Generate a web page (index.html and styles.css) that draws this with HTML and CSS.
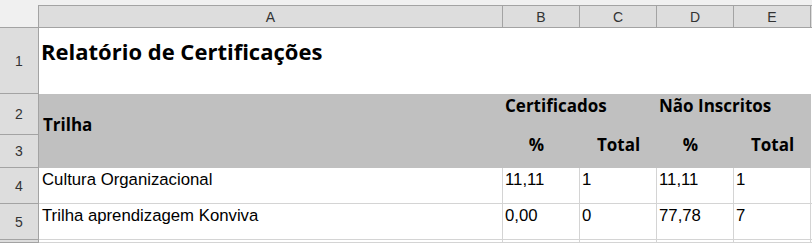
FILE: index.html
```html
<!DOCTYPE html>
<html lang="pt">
<head>
<meta charset="utf-8">
<title>Relatório de Certificações</title>
<link rel="stylesheet" href="styles.css">
</head>
<body>
<div class="sheet">
  <div class="band"></div>

  <div class="corner"></div>
  <div class="colhead">A</div>
  <div class="colhead">B</div>
  <div class="colhead">C</div>
  <div class="colhead">D</div>
  <div class="colhead">E</div>
  <div class="colhead rest"></div>

  <div class="rowhead">1</div>
  <div class="title">Relatório de Certificações</div>

  <div class="rowhead">2</div>
  <div class="hdr trilha">Trilha</div>
  <div class="hdr group">Certificados</div>
  <div class="hdr group">Não Inscritos</div>
  <div class="blank"></div>

  <div class="rowhead">3</div>
  <div class="hdr"></div>
  <div class="hdr sub pct">%</div>
  <div class="hdr sub">Total</div>
  <div class="hdr sub pct">%</div>
  <div class="hdr sub">Total</div>
  <div class="blank"></div>

  <div class="rowhead">4</div>
  <div class="cell name">Cultura Organizacional</div>
  <div class="cell">11,11</div>
  <div class="cell">1</div>
  <div class="cell">11,11</div>
  <div class="cell">1</div>
  <div class="cell end"></div>

  <div class="rowhead">5</div>
  <div class="cell name">Trilha aprendizagem Konviva</div>
  <div class="cell">0,00</div>
  <div class="cell">0</div>
  <div class="cell">77,78</div>
  <div class="cell">7</div>
  <div class="cell end"></div>

  <div class="rowhead"></div>
  <div class="cell name"></div>
  <div class="cell"></div>
  <div class="cell"></div>
  <div class="cell"></div>
  <div class="cell"></div>
  <div class="cell end"></div>
</div>
</body>
</html>
```

FILE: styles.css
```css
html, body {
  margin: 0;
  padding: 0;
  background: #ffffff;
}

body {
  width: 812px;
  height: 243px;
  overflow: hidden;
}

.sheet {
  display: grid;
  grid-template-columns: 39px 464px 77px 77px 77px 77px 1fr;
  grid-template-rows: 5px 23px 66px 41px 33px 36px 36px 1fr;
  width: 812px;
  height: 243px;
  overflow: hidden;
  font-family: "Liberation Sans", Arial, sans-serif;
  color: #000;
}

.band {
  grid-column: 1 / -1;
  background: #f0f0f0;
}

.corner {
  background: #f0f0f0;
  border-right: 1px solid #a3a3a3;
  border-bottom: 1px solid #a3a3a3;
}

.colhead {
  box-sizing: border-box;
  background: #dddddd;
  border-top: 1px solid #a3a3a3;
  border-bottom: 1px solid #a3a3a3;
  border-right: 1px solid #a3a3a3;
  display: flex;
  align-items: center;
  justify-content: center;
  font-size: 14px;
  color: #333333;
}

.colhead.rest {
  border-right: 0;
}

.rowhead {
  box-sizing: border-box;
  background: #dddddd;
  border-right: 1px solid #a3a3a3;
  border-bottom: 1px solid #a3a3a3;
  display: flex;
  align-items: center;
  justify-content: center;
  font-size: 14px;
  color: #333333;
}

.title {
  grid-column: 2 / -1;
  padding: 8px 0 0 2px;
  font-family: "Open Sans", "Liberation Sans", sans-serif;
  font-weight: 700;
  font-size: 22px;
  line-height: 30px;
  white-space: nowrap;
}

.hdr {
  background: #c0c0c0;
  font-family: "Open Sans", "Liberation Sans", sans-serif;
  font-weight: 700;
  font-size: 17px;
  line-height: 20px;
  white-space: nowrap;
}

.trilha {
  display: flex;
  align-items: flex-end;
  padding: 0 0 0 4px;
}

.group {
  grid-column: span 2;
  padding: 2px 0 0 2px;
}

.sub {
  text-align: center;
  padding-top: 0;
}

.sub.pct {
  padding-right: 10px;
}

.blank {
  background: #ffffff;
}

.cell {
  box-sizing: border-box;
  border-right: 1px solid #d4d4d4;
  border-bottom: 1px solid #d4d4d4;
  padding: 2px 0 0 2px;
  font-size: 16.75px;
  line-height: 20px;
  white-space: nowrap;
}

.cell.name {
  padding-left: 3px;
}

.cell.end {
  border-right: 0;
}
```
